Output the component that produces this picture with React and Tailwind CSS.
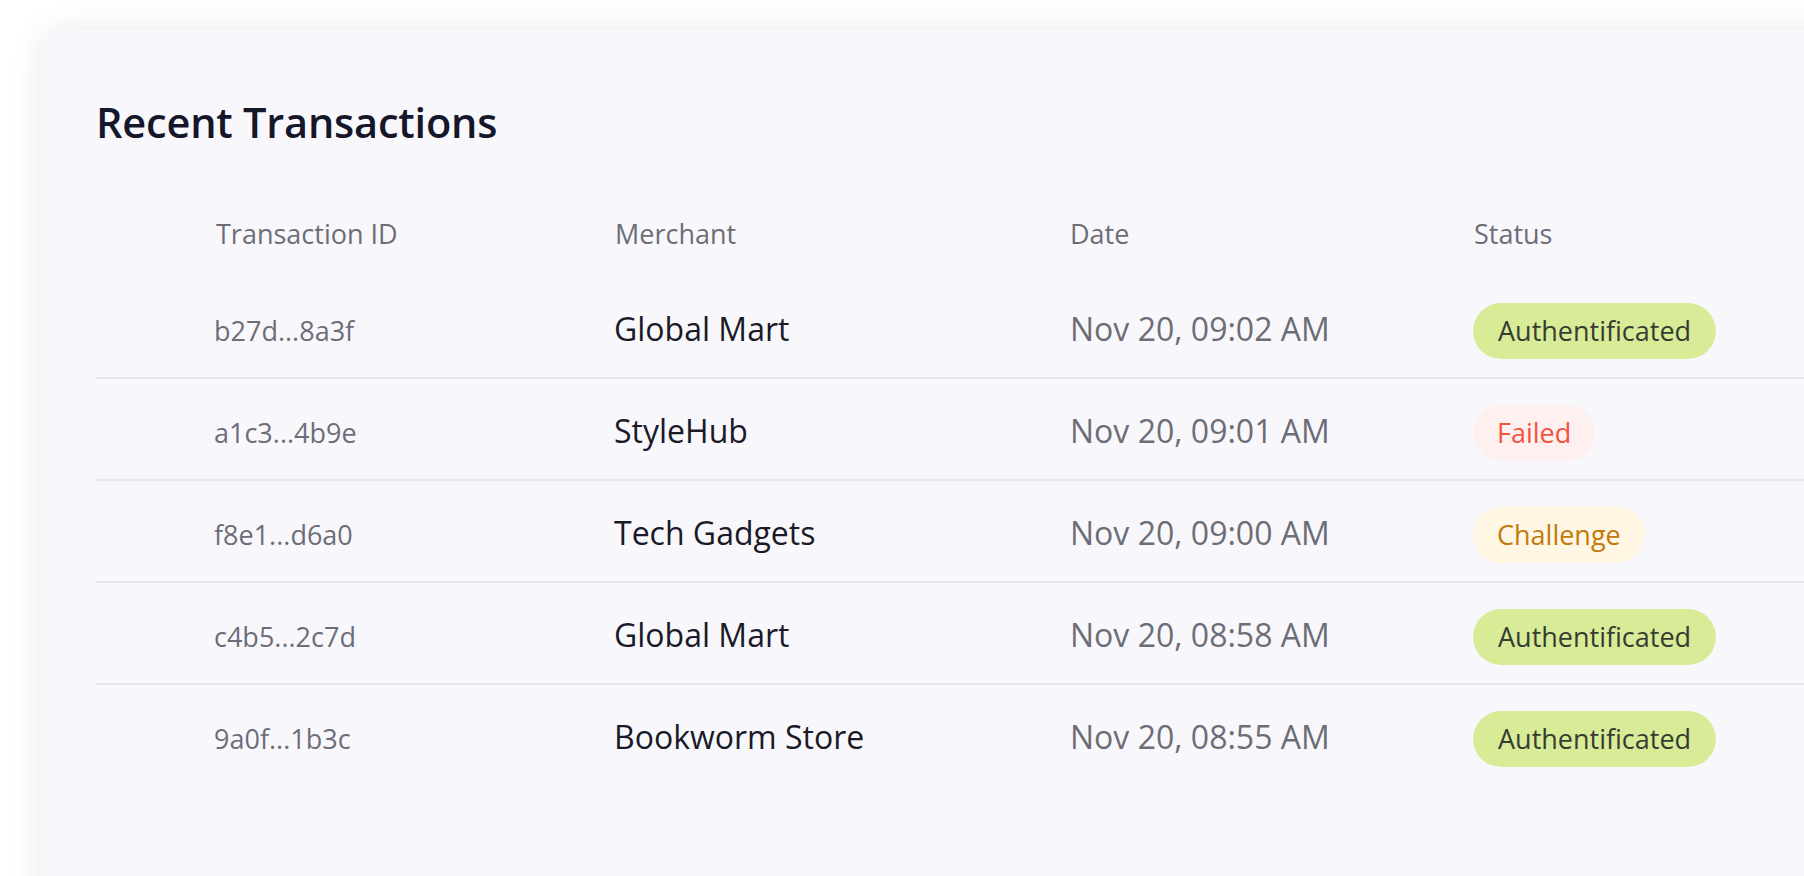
import React from "react";

const rows = [
  { id: "b27d...8a3f", merchant: "Global Mart", date: "Nov 20, 09:02 AM", status: "auth" },
  { id: "a1c3...4b9e", merchant: "StyleHub", date: "Nov 20, 09:01 AM", status: "failed" },
  { id: "f8e1...d6a0", merchant: "Tech Gadgets", date: "Nov 20, 09:00 AM", status: "challenge" },
  { id: "c4b5...2c7d", merchant: "Global Mart", date: "Nov 20, 08:58 AM", status: "auth" },
  { id: "9a0f...1b3c", merchant: "Bookworm Store", date: "Nov 20, 08:55 AM", status: "auth" },
];

function Pill({ status }) {
  if (status === "auth")
    return (
      <span className="inline-block rounded-full bg-[#d8ec98] px-[25px] py-[10px] text-[27px] leading-[36px] text-[#363c32]">
        Authentificated
      </span>
    );
  if (status === "failed")
    return (
      <span className="inline-block rounded-full bg-[#fff0f0] px-[24px] py-[10px] text-[27px] leading-[36px] text-[#f2553f]">
        Failed
      </span>
    );
  return (
    <span className="inline-block rounded-full bg-[#fff7e4] px-[24px] py-[10px] text-[27px] leading-[36px] text-[#c37a0c]">
      Challenge
    </span>
  );
}

export default function App() {
  return (
    <div
      className="h-[876px] w-[1804px] overflow-hidden bg-white"
      style={{ fontFamily: '"Open Sans", "Noto Sans", sans-serif' }}
    >
      <div className="ml-[40px] mt-[30px] w-[1840px] rounded-[22px] bg-[#f8f8fc] pb-[200px] pl-[56px] pt-[64px] shadow-[0_0_32px_rgba(0,0,0,0.09)]">
        <h2 className="text-[41.5px] font-semibold leading-[56px] tracking-[-0.2px] text-[#16162a]">
          Recent Transactions
        </h2>
        <div className="mt-[66px] grid h-[61px] grid-cols-[118px_399px_456px_404px_1fr] items-start text-[27px] leading-[36px] text-[#6d6d78]">
          <div />
          <div className="pl-[2px]">Transaction ID</div>
          <div className="pl-[2px]">Merchant</div>
          <div className="pl-[1px]">Date</div>
          <div className="pl-[1px]">Status</div>
        </div>
        <div>
          {rows.map((r, i) => (
            <div
              key={i}
              className={
                "grid h-[102px] grid-cols-[118px_399px_456px_404px_1fr] items-baseline pt-[26px] " +
                (i < rows.length - 1 ? "border-b-2 border-[#e6e6ec]" : "")
              }
            >
              <div />
              <div className="text-[27px] leading-[36px] text-[#6d6d78]">{r.id}</div>
              <div className="pl-[1px] text-[32px] leading-[40px] text-[#1a1a28]">{r.merchant}</div>
              <div className="pl-[1px] text-[32px] leading-[40px] text-[#6d6d78]">{r.date}</div>
              <div>
                <Pill status={r.status} />
              </div>
            </div>
          ))}
        </div>
      </div>
    </div>
  );
}
